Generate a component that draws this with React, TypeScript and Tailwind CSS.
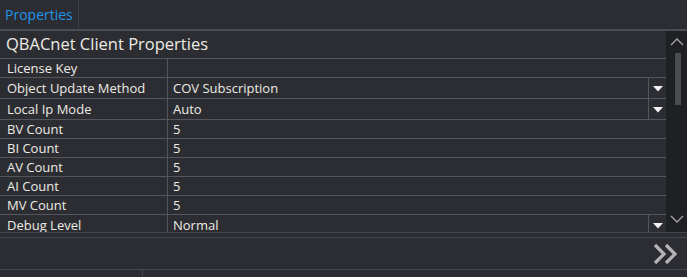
import React from "react";

const font = { fontFamily: '"Open Sans", "Noto Sans", sans-serif' };

type Row = { label: string; value: string; dropdown?: boolean; tall?: boolean };

const rows: Row[] = [
	{ label: "License Key", value: "" },
	{ label: "Object Update Method", value: "COV Subscription", dropdown: true, tall: true },
	{ label: "Local Ip Mode", value: "Auto", dropdown: true, tall: true },
	{ label: "BV Count", value: "5" },
	{ label: "BI Count", value: "5" },
	{ label: "AV Count", value: "5" },
	{ label: "AI Count", value: "5" },
	{ label: "MV Count", value: "5" },
	{ label: "Debug Level", value: "Normal", dropdown: true, tall: true },
];

const Caret = () => (
	<svg width="10" height="6" viewBox="0 0 10 6">
		<path d="M0 0 H10 L5 5.5 Z" fill="#f2f2f2" />
	</svg>
);

const PropRow = ({ row }: { row: Row }) => (
	<div
		className={`flex shrink-0 border-b border-[#55565b] text-[13px] text-[#ecebe4] ${
			row.tall ? "h-[21px]" : "h-[19px]"
		}`}
	>
		<div className="w-[168px] shrink-0 border-r border-[#55565b] pl-[7px] pt-[1px] flex items-center">
			{row.label}
		</div>
		<div className="flex-1 flex items-center pl-[5px] pt-[1px]">{row.value}</div>
		{row.dropdown && (
			<div className="w-[18px] shrink-0 border-l border-[#55565b] flex items-center justify-center pt-[2px]">
				<Caret />
			</div>
		)}
	</div>
);

export default function App() {
	return (
		<div className="w-[687px] h-[277px] bg-[#2c2d32] flex flex-col overflow-hidden" style={font}>
			{/* tab strip */}
			<div className="h-[29px] flex shrink-0">
				<div className="w-[79px] border-r border-[#3e3f44] flex items-center pl-[5px] text-[14px] text-[#2293ea]">
					Properties
				</div>
			</div>
			<div className="h-[2px] bg-[#4c4d52] shrink-0" />

			{/* grid + scrollbar */}
			<div className="h-[201px] flex shrink-0">
				<div className="flex-1 flex flex-col overflow-hidden">
					<div className="h-[28px] shrink-0 border-b border-[#55565b] pl-[6px] flex items-center text-[16.5px] text-[#ecebe4]">
						QBACnet Client Properties
					</div>
					{rows.map((r) => (
						<PropRow key={r.label} row={r} />
					))}
				</div>
				<div className="w-[21px] shrink-0 bg-[#1f2024] flex flex-col items-center">
					<svg width="14" height="8" viewBox="0 0 14 8" className="mt-[7px] ml-[1px]">
						<path d="M1 7 L7 1 L13 7" stroke="#a3a3a6" strokeWidth="1.4" fill="none" />
					</svg>
					<div className="w-[6px] h-[52px] mt-[7px] ml-[2px] bg-[#4b4c52]" />
					<div className="flex-1" />
					<svg width="14" height="8" viewBox="0 0 14 8" className="mb-[9px] ml-[1px]">
						<path d="M1 1 L7 7 L13 1" stroke="#a3a3a6" strokeWidth="1.4" fill="none" />
					</svg>
				</div>
			</div>
			<div className="h-[1px] bg-[#45464b] shrink-0" />

			{/* footer */}
			<div className="h-[4px] shrink-0" />
			<div className="h-[33px] shrink-0 border-t border-b border-[#45464b] flex items-center justify-end pr-[8px]">
				<svg width="26" height="22" viewBox="0 0 26 22">
					<path d="M2 2 L11 11 L2 20 M13 2 L22 11 L13 20" stroke="#b4b4b6" strokeWidth="3.2" fill="none" />
				</svg>
			</div>
			<div className="flex-1 flex">
				<div className="w-[143px] border-r border-[#45464b]" />
			</div>
		</div>
	);
}
